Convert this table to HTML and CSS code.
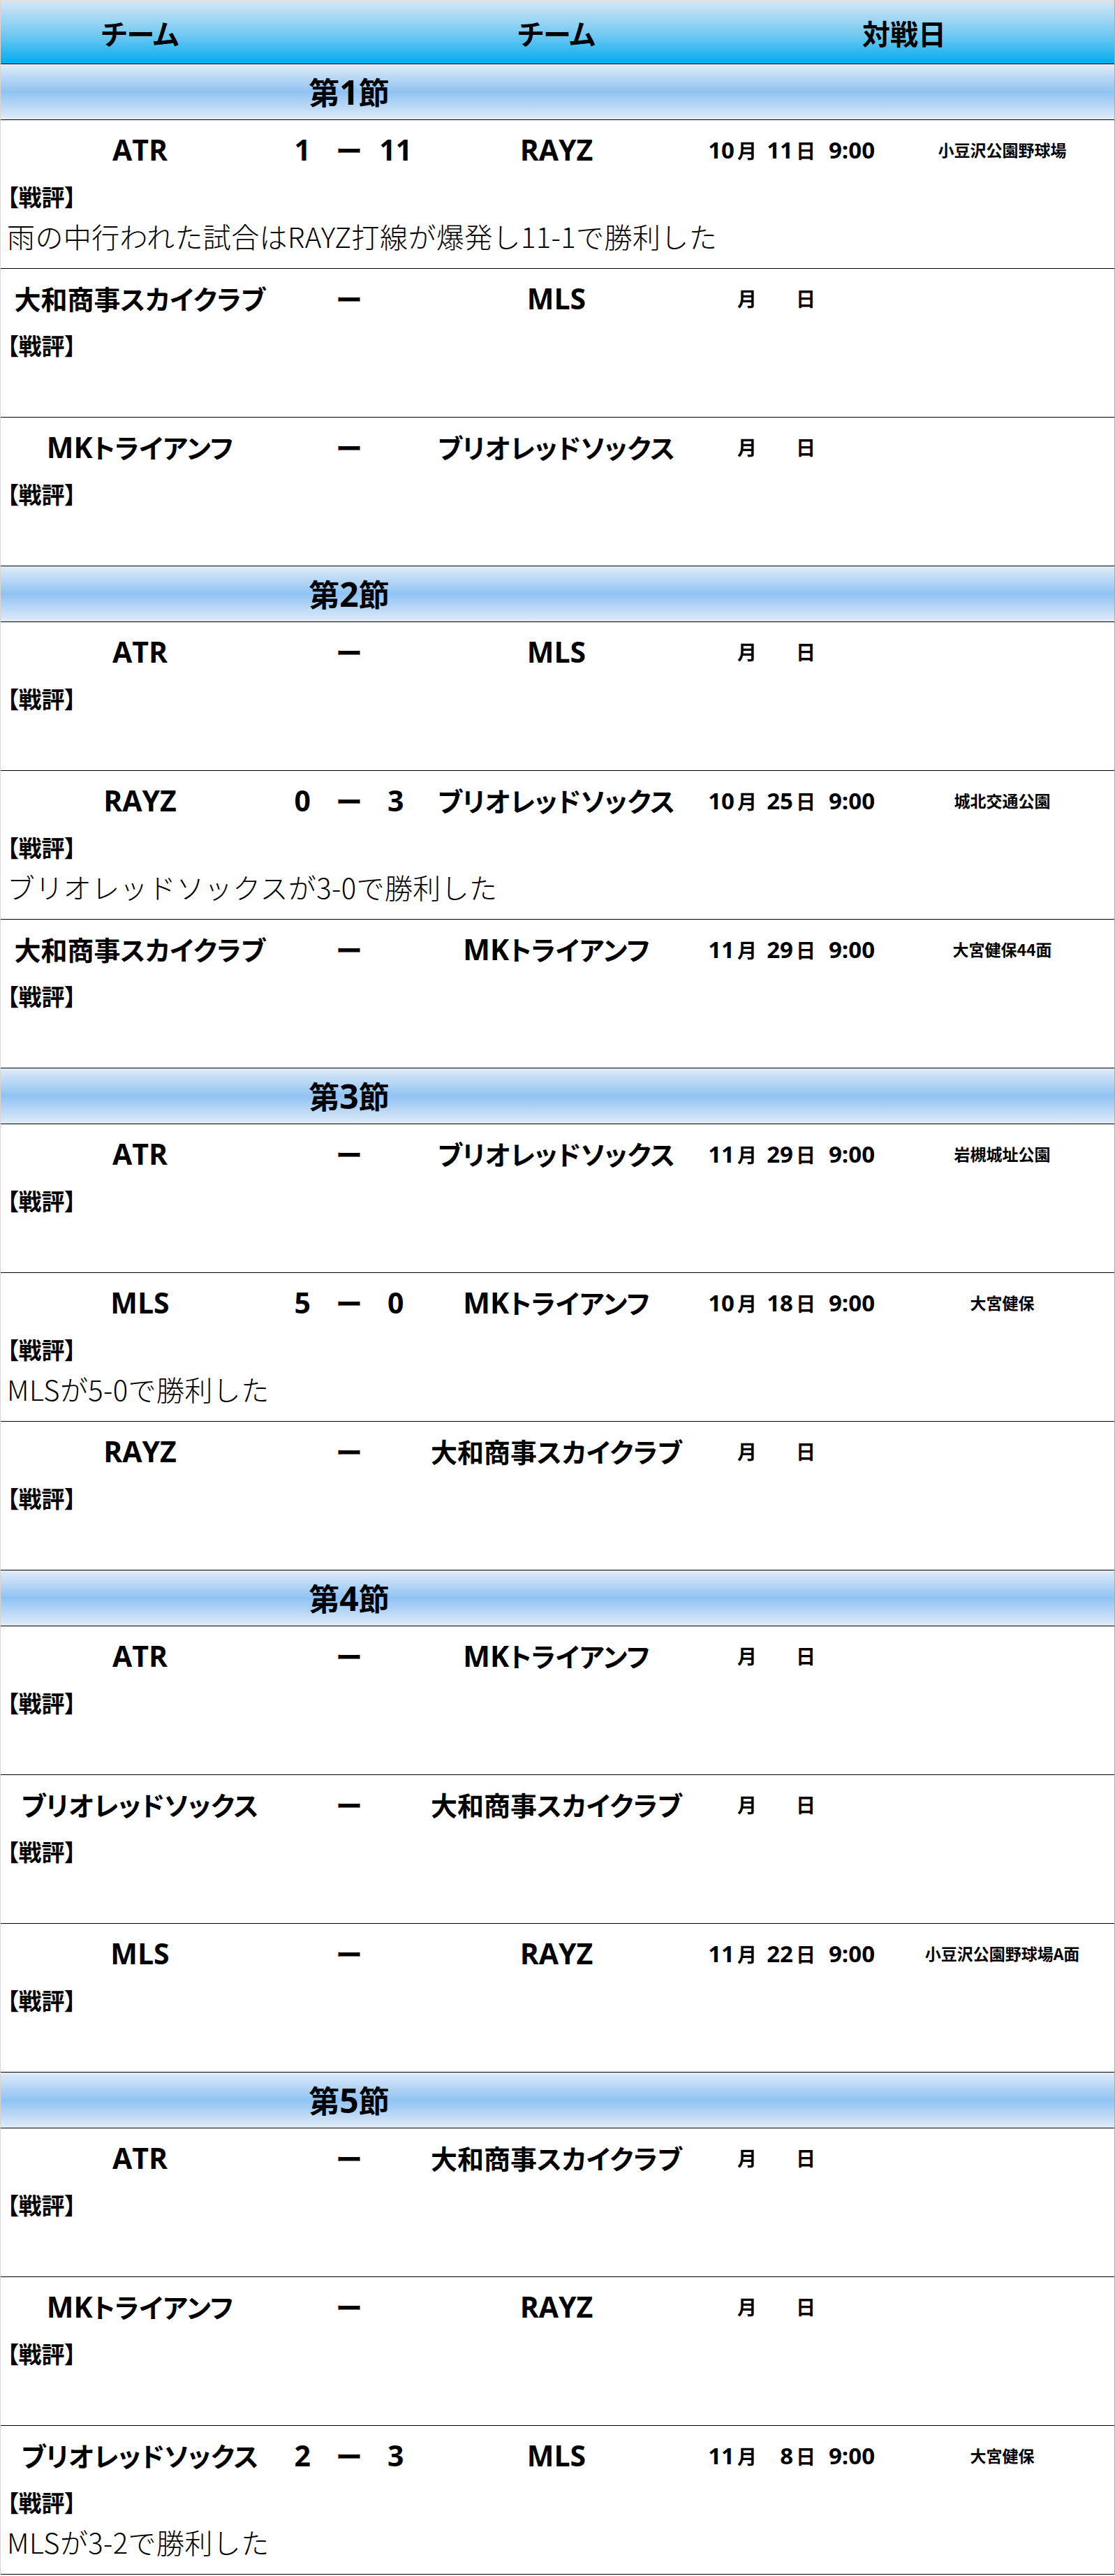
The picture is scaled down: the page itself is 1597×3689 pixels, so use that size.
FILE: index.html
```html
<!DOCTYPE html>
<html lang="ja">
<head>
<meta charset="utf-8">
<title>対戦表</title>
<link rel="stylesheet" href="styles.css">
</head>
<body>
<div class="schedule">
  <div class="cols head">
    <div class="h-team1">チーム</div>
    <div class="h-score"></div>
    <div class="h-team2">チーム</div>
    <div class="h-date">対戦日</div>
  </div>

  <!-- 第1節 -->
  <div class="cols round-title"><div class="round-label">第<span class="lat">1</span>節</div></div>
  <div class="match">
    <div class="cols match-top">
      <div class="team"><span class="lat">ATR</span></div>
      <div class="score"><span class="pt">1</span><span class="dash">ー</span><span class="pt">11</span></div>
      <div class="team"><span class="lat">RAYZ</span></div>
      <div class="date"><span class="num">10</span><span class="k">月</span><span class="num">11</span><span class="k d">日</span><span class="num time">9:00</span></div>
      <div class="venue">小豆沢公園野球場</div>
    </div>
    <div class="review-label">【戦評】</div>
    <div class="review">雨の中行われた試合はRAYZ打線が爆発し11-1で勝利した</div>
  </div>
  <div class="match">
    <div class="cols match-top">
      <div class="team">大和商事スカイクラブ</div>
      <div class="score"><span class="pt"></span><span class="dash">ー</span><span class="pt"></span></div>
      <div class="team"><span class="lat">MLS</span></div>
      <div class="date"><span class="num"></span><span class="k">月</span><span class="num"></span><span class="k d">日</span><span class="num time"></span></div>
      <div class="venue"></div>
    </div>
    <div class="review-label">【戦評】</div>
    <div class="review"></div>
  </div>
  <div class="match">
    <div class="cols match-top">
      <div class="team"><span class="lat">MK</span>トライアンフ</div>
      <div class="score"><span class="pt"></span><span class="dash">ー</span><span class="pt"></span></div>
      <div class="team">ブリオレッドソックス</div>
      <div class="date"><span class="num"></span><span class="k">月</span><span class="num"></span><span class="k d">日</span><span class="num time"></span></div>
      <div class="venue"></div>
    </div>
    <div class="review-label">【戦評】</div>
    <div class="review"></div>
  </div>

  <!-- 第2節 -->
  <div class="cols round-title"><div class="round-label">第<span class="lat">2</span>節</div></div>
  <div class="match">
    <div class="cols match-top">
      <div class="team"><span class="lat">ATR</span></div>
      <div class="score"><span class="pt"></span><span class="dash">ー</span><span class="pt"></span></div>
      <div class="team"><span class="lat">MLS</span></div>
      <div class="date"><span class="num"></span><span class="k">月</span><span class="num"></span><span class="k d">日</span><span class="num time"></span></div>
      <div class="venue"></div>
    </div>
    <div class="review-label">【戦評】</div>
    <div class="review"></div>
  </div>
  <div class="match">
    <div class="cols match-top">
      <div class="team"><span class="lat">RAYZ</span></div>
      <div class="score"><span class="pt">0</span><span class="dash">ー</span><span class="pt">3</span></div>
      <div class="team">ブリオレッドソックス</div>
      <div class="date"><span class="num">10</span><span class="k">月</span><span class="num">25</span><span class="k d">日</span><span class="num time">9:00</span></div>
      <div class="venue">城北交通公園</div>
    </div>
    <div class="review-label">【戦評】</div>
    <div class="review">ブリオレッドソックスが3-0で勝利した</div>
  </div>
  <div class="match">
    <div class="cols match-top">
      <div class="team">大和商事スカイクラブ</div>
      <div class="score"><span class="pt"></span><span class="dash">ー</span><span class="pt"></span></div>
      <div class="team"><span class="lat">MK</span>トライアンフ</div>
      <div class="date"><span class="num">11</span><span class="k">月</span><span class="num">29</span><span class="k d">日</span><span class="num time">9:00</span></div>
      <div class="venue">大宮健保44面</div>
    </div>
    <div class="review-label">【戦評】</div>
    <div class="review"></div>
  </div>

  <!-- 第3節 -->
  <div class="cols round-title"><div class="round-label">第<span class="lat">3</span>節</div></div>
  <div class="match">
    <div class="cols match-top">
      <div class="team"><span class="lat">ATR</span></div>
      <div class="score"><span class="pt"></span><span class="dash">ー</span><span class="pt"></span></div>
      <div class="team">ブリオレッドソックス</div>
      <div class="date"><span class="num">11</span><span class="k">月</span><span class="num">29</span><span class="k d">日</span><span class="num time">9:00</span></div>
      <div class="venue">岩槻城址公園</div>
    </div>
    <div class="review-label">【戦評】</div>
    <div class="review"></div>
  </div>
  <div class="match">
    <div class="cols match-top">
      <div class="team"><span class="lat">MLS</span></div>
      <div class="score"><span class="pt">5</span><span class="dash">ー</span><span class="pt">0</span></div>
      <div class="team"><span class="lat">MK</span>トライアンフ</div>
      <div class="date"><span class="num">10</span><span class="k">月</span><span class="num">18</span><span class="k d">日</span><span class="num time">9:00</span></div>
      <div class="venue">大宮健保</div>
    </div>
    <div class="review-label">【戦評】</div>
    <div class="review">MLSが5-0で勝利した</div>
  </div>
  <div class="match">
    <div class="cols match-top">
      <div class="team"><span class="lat">RAYZ</span></div>
      <div class="score"><span class="pt"></span><span class="dash">ー</span><span class="pt"></span></div>
      <div class="team">大和商事スカイクラブ</div>
      <div class="date"><span class="num"></span><span class="k">月</span><span class="num"></span><span class="k d">日</span><span class="num time"></span></div>
      <div class="venue"></div>
    </div>
    <div class="review-label">【戦評】</div>
    <div class="review"></div>
  </div>

  <!-- 第4節 -->
  <div class="cols round-title"><div class="round-label">第<span class="lat">4</span>節</div></div>
  <div class="match">
    <div class="cols match-top">
      <div class="team"><span class="lat">ATR</span></div>
      <div class="score"><span class="pt"></span><span class="dash">ー</span><span class="pt"></span></div>
      <div class="team"><span class="lat">MK</span>トライアンフ</div>
      <div class="date"><span class="num"></span><span class="k">月</span><span class="num"></span><span class="k d">日</span><span class="num time"></span></div>
      <div class="venue"></div>
    </div>
    <div class="review-label">【戦評】</div>
    <div class="review"></div>
  </div>
  <div class="match">
    <div class="cols match-top">
      <div class="team">ブリオレッドソックス</div>
      <div class="score"><span class="pt"></span><span class="dash">ー</span><span class="pt"></span></div>
      <div class="team">大和商事スカイクラブ</div>
      <div class="date"><span class="num"></span><span class="k">月</span><span class="num"></span><span class="k d">日</span><span class="num time"></span></div>
      <div class="venue"></div>
    </div>
    <div class="review-label">【戦評】</div>
    <div class="review"></div>
  </div>
  <div class="match">
    <div class="cols match-top">
      <div class="team"><span class="lat">MLS</span></div>
      <div class="score"><span class="pt"></span><span class="dash">ー</span><span class="pt"></span></div>
      <div class="team"><span class="lat">RAYZ</span></div>
      <div class="date"><span class="num">11</span><span class="k">月</span><span class="num">22</span><span class="k d">日</span><span class="num time">9:00</span></div>
      <div class="venue">小豆沢公園野球場A面</div>
    </div>
    <div class="review-label">【戦評】</div>
    <div class="review"></div>
  </div>

  <!-- 第5節 -->
  <div class="cols round-title"><div class="round-label">第<span class="lat">5</span>節</div></div>
  <div class="match">
    <div class="cols match-top">
      <div class="team"><span class="lat">ATR</span></div>
      <div class="score"><span class="pt"></span><span class="dash">ー</span><span class="pt"></span></div>
      <div class="team">大和商事スカイクラブ</div>
      <div class="date"><span class="num"></span><span class="k">月</span><span class="num"></span><span class="k d">日</span><span class="num time"></span></div>
      <div class="venue"></div>
    </div>
    <div class="review-label">【戦評】</div>
    <div class="review"></div>
  </div>
  <div class="match">
    <div class="cols match-top">
      <div class="team"><span class="lat">MK</span>トライアンフ</div>
      <div class="score"><span class="pt"></span><span class="dash">ー</span><span class="pt"></span></div>
      <div class="team"><span class="lat">RAYZ</span></div>
      <div class="date"><span class="num"></span><span class="k">月</span><span class="num"></span><span class="k d">日</span><span class="num time"></span></div>
      <div class="venue"></div>
    </div>
    <div class="review-label">【戦評】</div>
    <div class="review"></div>
  </div>
  <div class="match">
    <div class="cols match-top">
      <div class="team">ブリオレッドソックス</div>
      <div class="score"><span class="pt">2</span><span class="dash">ー</span><span class="pt">3</span></div>
      <div class="team"><span class="lat">MLS</span></div>
      <div class="date"><span class="num">11</span><span class="k">月</span><span class="num">8</span><span class="k d">日</span><span class="num time">9:00</span></div>
      <div class="venue">大宮健保</div>
    </div>
    <div class="review-label">【戦評】</div>
    <div class="review">MLSが3-2で勝利した</div>
  </div>
</div>
</body>
</html>
```

FILE: styles.css
```css
html, body {
  margin: 0;
  padding: 0;
  background: #ffffff;
}

body {
  font-family: "Noto Sans CJK JP", "Noto Sans", sans-serif;
  color: #000000;
}

.schedule {
  width: 1597px;
  box-sizing: border-box;
  border-top: 2px solid #e1e1e1;
  border-left: 1px solid #d6d6d6;
  border-right: 1px solid #aaaaaa;
}

.cols {
  display: grid;
  grid-template-columns: 399px 200px 394px 281px 1fr;
}

.lat,
.pt,
.num {
  font-family: "Open Sans", "Noto Sans CJK JP", sans-serif;
}

/* header row */
.head {
  height: 89px;
  border-bottom: 1px solid #000;
  background: linear-gradient(#d4e5f5, #6fc8f1 55%, #02acee);
  align-items: center;
  text-align: center;
  font-size: 40px;
  font-weight: 700;
  line-height: 1;
  font-feature-settings: "palt";
}

.h-date {
  grid-column: 4 / 6;
}

/* round title */
.round-title {
  height: 79px;
  border-bottom: 1px solid #000;
  background: linear-gradient(#e0ebf8, #90c3f3 50%, #e0ebf8);
  align-items: center;
}

.round-label {
  grid-column: 2;
  text-align: center;
  font-size: 44px;
  font-weight: 700;
  line-height: 1;
  white-space: nowrap;
}

.round-label .lat {
  font-size: 48px;
}

/* match */
.match {
  height: 212px;
  border-bottom: 1px solid #000;
}

.match-top {
  height: 84px;
  align-items: center;
}

.team {
  text-align: center;
  font-size: 38px;
  font-weight: 700;
  line-height: 1;
  white-space: nowrap;
  font-feature-settings: "palt";
}

.team .lat {
  font-size: 41px;
}

.score {
  display: grid;
  grid-template-columns: repeat(3, 1fr);
  align-items: baseline;
  text-align: center;
  font-weight: 700;
  line-height: 1;
}

.score .pt {
  font-size: 41px;
}

.score .dash {
  font-size: 38px;
}

.date {
  display: grid;
  grid-template-columns: 58px 33px 51px 48px 1fr;
  align-items: baseline;
  font-weight: 700;
  line-height: 1;
  white-space: nowrap;
}

.date .num {
  font-size: 33px;
  text-align: right;
}

.date .k {
  font-size: 28px;
  padding-left: 4px;
}

.date .k.d {
  padding-left: 4px;
}

.date .time {
  text-align: left;
  padding-left: 3px;
}

.venue {
  text-align: center;
  font-size: 23px;
  font-weight: 700;
  line-height: 1;
  white-space: nowrap;
}

.review-label {
  height: 50px;
  line-height: 50px;
  padding-left: 9px;
  font-size: 33px;
  font-weight: 700;
  font-feature-settings: "palt";
}

.review {
  height: 64px;
  line-height: 64px;
  padding-left: 9px;
  font-size: 40px;
  font-weight: 300;
  letter-spacing: 0.4px;
  white-space: nowrap;
}
```
